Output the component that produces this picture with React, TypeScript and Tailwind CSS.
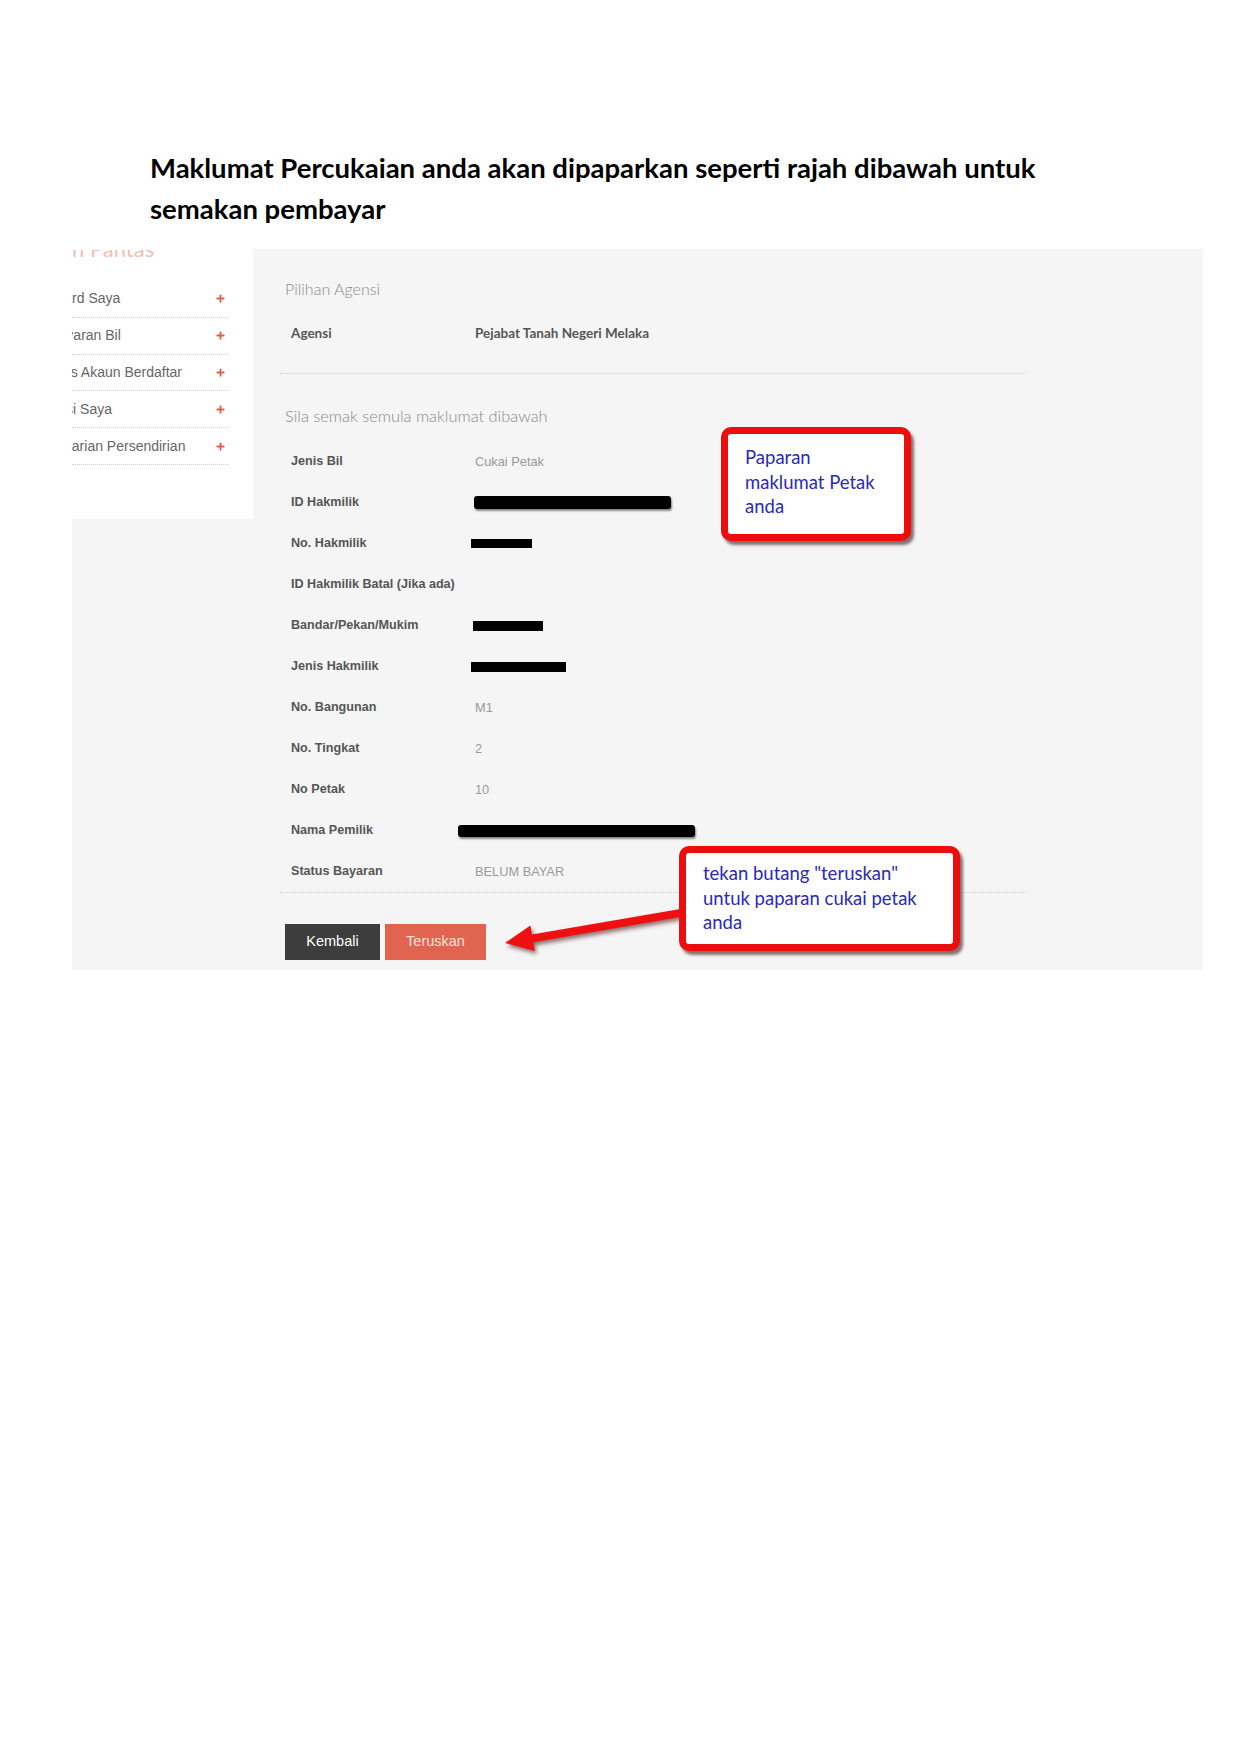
import { Plus } from "lucide-react";

type Row = {
  label: string;
  value?: string;
  // redaction bar drawn in place of the value
  mask?: string;
};

const rows: Row[] = [
  { label: "Jenis Bil", value: "Cukai Petak" },
  { label: "ID Hakmilik", mask: "ml-[-1px] w-[197px] h-[13px] rounded-[3px] shadow-[1px_2px_2px_rgba(0,0,0,0.45)]" },
  { label: "No. Hakmilik", mask: "ml-[-4px] w-[61px] h-[9px]" },
  { label: "ID Hakmilik Batal (Jika ada)" },
  { label: "Bandar/Pekan/Mukim", mask: "ml-[-2px] w-[70px] h-[10px]" },
  { label: "Jenis Hakmilik", mask: "ml-[-4px] w-[95px] h-[10px]" },
  { label: "No. Bangunan", value: "M1" },
  { label: "No. Tingkat", value: "2" },
  { label: "No Petak", value: "10" },
  { label: "Nama Pemilik", mask: "ml-[-17px] w-[237px] h-[12px] rounded-[3px] shadow-[1px_2px_2px_rgba(0,0,0,0.45)]" },
  { label: "Status Bayaran", value: "BELUM BAYAR" },
];

const menu = [
  { text: "Dashboard Saya", cls: "-ml-[56px]" },
  { text: "Pembayaran Bil", cls: "-ml-[50px]" },
  { text: "Status Akaun Berdaftar", cls: "-ml-[34px]" },
  { text: "Transaksi Saya", cls: "-ml-[56px]" },
  { text: "Tetapan Carian Persendirian", cls: "-ml-[64px]" },
];

function Sidebar() {
  return (
    <div className="w-[181px] flex flex-col">
      <div className="h-[277px] bg-white shadow-[2px_2px_3px_rgba(0,0,0,0.08)] overflow-hidden">
        <div className="h-[8px]" />
        <div className="h-[8px] overflow-hidden">
          <div className="-mt-[12px] text-[22px] leading-none text-[#f3beb3] font-['Lato'] whitespace-nowrap">
            n Pantas
          </div>
        </div>
        <div className="mt-[23px] mr-[25px]">
          {menu.map((m) => (
            <div
              key={m.text}
              className="h-[36.8px] flex items-center justify-between border-b border-dotted border-[#cfcfcf] pr-[2px]"
            >
              <div className="overflow-hidden flex-1">
                <div
                  className={`${m.cls} whitespace-nowrap text-[14px] text-[#666] font-['Liberation_Sans',Arial,sans-serif]`}
                >
                  {m.text}
                </div>
              </div>
              <Plus size={11} strokeWidth={4} className="text-[#e2604a] shrink-0" />
            </div>
          ))}
        </div>
      </div>
      <div className="flex-1 bg-[#f5f5f5]" />
    </div>
  );
}

function Details() {
  return (
    <div className="flex-1 flex flex-col">
      <div className="h-[10px] bg-white" />
      <div className="flex-1 bg-[#f5f5f5] pb-[10px]">
        <div className="mt-[29px] ml-[32px] h-[22px] leading-[22px] text-[16px] font-light text-[#8a8a8a] font-['Lato']">
          Pilihan Agensi
        </div>
        <div className="mt-[13px] ml-[27px] w-[746px] h-[41px] pl-[11px] flex items-center text-[13.5px] font-bold text-[#555] font-['Lato']">
          <div className="w-[184px]">Agensi</div>
          <div>Pejabat Tanah Negeri Melaka</div>
        </div>
        <div className="mt-[19px] ml-[27px] w-[746px] border-b border-dotted border-[#cfcfcf]" />
        <div className="mt-[31px] ml-[32px] h-[22px] leading-[22px] text-[16.4px] font-light text-[#8a8a8a] font-['Lato']">
          Sila semak semula maklumat dibawah
        </div>
        <div className="mt-[14px] ml-[27px] w-[746px] border-b border-dotted border-[#cfcfcf] font-['Liberation_Sans',Arial,sans-serif]">
          {rows.map((r) => (
            <div key={r.label} className="h-[41px] pl-[11px] flex items-center">
              <div className="w-[184px] text-[12.6px] font-bold text-[#555]">{r.label}</div>
              {r.value && <div className="text-[12.8px] text-[#9a9a9a]">{r.value}</div>}
              {r.mask && <div className={`bg-black ${r.mask}`} />}
            </div>
          ))}
        </div>
        <div className="mt-[31px] ml-[32px] flex gap-[5px] font-['Liberation_Sans',Arial,sans-serif] text-[14.5px]">
          <button className="w-[95px] h-[36px] bg-[#3d3d3d] text-white">Kembali</button>
          <button className="w-[101px] h-[36px] bg-[#e0644f] text-[#fbe3dd]">Teruskan</button>
        </div>
      </div>
    </div>
  );
}

function Callout({ className, lines }: { className: string; lines: string[] }) {
  return (
    <div
      className={`absolute bg-white border-[7px] border-[#ee0d0d] rounded-[10px] shadow-[3px_4px_3px_rgba(40,0,0,0.55)] text-[18.5px] leading-[24.5px] text-[#2a2ab8] font-['Lato'] ${className}`}
    >
      {lines.map((l) => (
        <div key={l} className="whitespace-nowrap">
          {l}
        </div>
      ))}
    </div>
  );
}

export default function App() {
  return (
    <div className="relative w-[1240px] h-[1754px] bg-white">
      <div className="pt-[147px] pl-[150px]">
        <h1 className="w-[960px] text-[27.5px] leading-[41px] font-bold text-black font-['Lato']">
          Maklumat Percukaian anda akan dipaparkan seperti rajah dibawah untuk semakan pembayar
        </h1>
      </div>

      <div className="mt-[13px] ml-[72px] w-[1131px] h-[728px] flex">
        <Sidebar />
        <Details />
      </div>

      {/* pointer to the Teruskan button */}
      <svg
        className="absolute left-0 top-0 pointer-events-none drop-shadow-[2px_3px_2px_rgba(60,0,0,0.55)]"
        width="1240"
        height="1000"
      >
        <polygon
          points="505,943 534.8,951.1 533.3,942.2 700.7,913.5 699.3,905.7 531.9,934.4 530.4,925.5"
          fill="#ee1010"
        />
      </svg>

      <Callout
        className="left-[721px] top-[427px] w-[190px] h-[114px] pl-[17px] pt-[11px]"
        lines={["Paparan", "maklumat Petak", "anda"]}
      />
      <Callout
        className="left-[679px] top-[846px] w-[281px] h-[105px] pl-[17px] pt-[8px]"
        lines={['tekan butang "teruskan"', "untuk paparan cukai petak", "anda"]}
      />
    </div>
  );
}
